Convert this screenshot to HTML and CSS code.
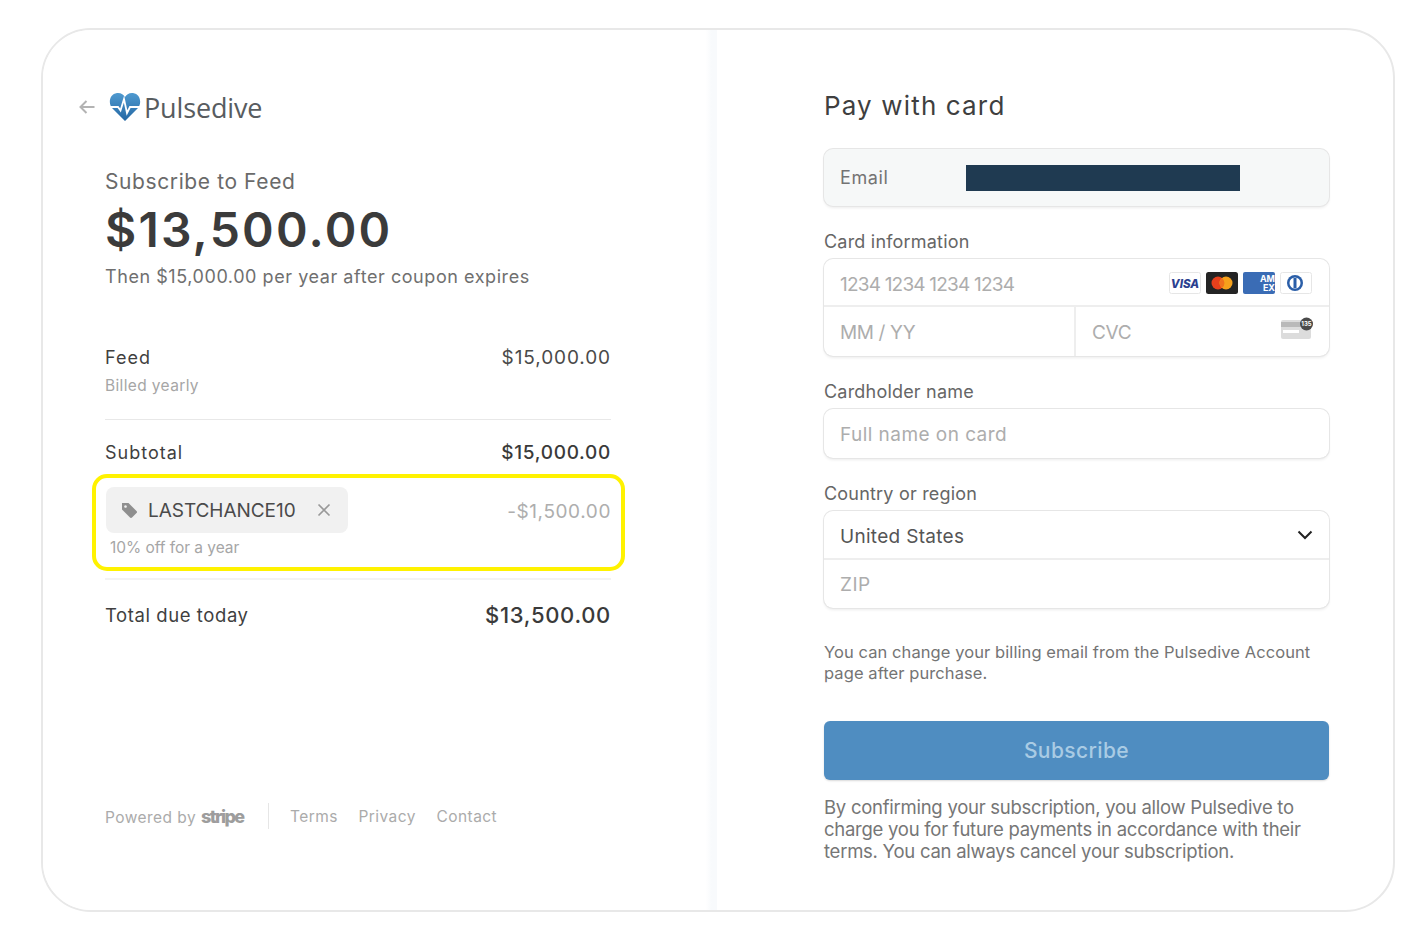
FILE: index.html
```html
<!DOCTYPE html>
<html lang="en">
<head>
<meta charset="utf-8">
<title>Subscribe to Feed</title>
<link rel="stylesheet" href="styles.css">
</head>
<body>
<main class="frame">
  <section class="summary">
    <header class="brand">
      <svg class="back" width="18" height="16" viewBox="0 0 18 16"><path d="M16.5 8H2.5M8.5 2L2.5 8l6 6" fill="none" stroke="#b3b3b3" stroke-width="2"/></svg>
      <svg class="heart" width="32" height="30" viewBox="0 0 32 30">
        <defs><linearGradient id="hg" x1="0" y1="0" x2="0" y2="1"><stop offset="0" stop-color="#4f9ad0"/><stop offset="1" stop-color="#2467a3"/></linearGradient></defs>
        <path d="M16 29L3 16C-1 11 .5 2 8 1c4-.4 6.500 1.500 8 4 1.500-2.500 4-4.400 8-4 7.500 1 9 10 5 15z" fill="url(#hg)"/>
        <path d="M1 15h8l2.500 3.500L15 7l3 14 3-6h10" fill="none" stroke="#fff" stroke-width="1.800"/>
      </svg>
      <span class="wordmark">Pulsedive</span>
    </header>

    <p class="sub-title">Subscribe to Feed</p>
    <p class="amount">$13,500.00</p>
    <p class="then">Then $15,000.00 per year after coupon expires</p>

    <div class="line-item">
      <div class="row"><span>Feed</span><span class="price">$15,000.00</span></div>
      <p class="muted billed">Billed yearly</p>
    </div>

    <div class="row subtotal"><span>Subtotal</span><span class="price strong">$15,000.00</span></div>

    <div class="coupon">
      <div class="coupon-row">
        <div class="chip">
          <svg class="tag" width="16" height="16" viewBox="0 0 16 16"><path d="M1 1h6.500L15.500 9a1.400 1.400 0 0 1 0 2L11 15.500a1.400 1.400 0 0 1-2 0L1 7.500zM4.500 3.200a1.300 1.300 0 1 0 .01 0z" fill="#8f8f8f" fill-rule="evenodd"/></svg>
          <span class="code">LASTCHANCE10</span>
          <svg class="close" width="14" height="14" viewBox="0 0 14 14"><path d="M1.500 1.500l11 11M12.500 1.500l-11 11" stroke="#999" stroke-width="1.700"/></svg>
        </div>
        <span class="discount">-$1,500.00</span>
      </div>
      <p class="muted off">10% off for a year</p>
    </div>

    <div class="row total"><span>Total due today</span><span class="price total-price">$13,500.00</span></div>

    <footer class="foot">
      <span class="powered">Powered by <b class="stripe">stripe</b></span>
      <span class="foot-sep"></span>
      <nav class="foot-links"><span>Terms</span><span>Privacy</span><span>Contact</span></nav>
    </footer>
  </section>

  <section class="pay">
    <h1 class="pay-title">Pay with card</h1>

    <div class="email-box">
      <span class="email-label">Email</span>
      <span class="redact"></span>
    </div>

    <p class="label card-label">Card information</p>
    <div class="group">
      <div class="cell cell-row">
        <span class="ph digits">1234 1234 1234 1234</span>
        <span class="brands">
          <svg class="card" width="32" height="22" viewBox="0 0 32 22"><rect x=".5" y=".5" width="31" height="21" rx="2" fill="#fff" stroke="#e6e6e6"/><text x="16" y="15.500" text-anchor="middle" class="visa">VISA</text></svg>
          <svg class="card" width="32" height="22" viewBox="0 0 32 22"><rect width="32" height="22" rx="2.500" fill="#242424"/><circle cx="12" cy="11" r="6.500" fill="#e8401c"/><circle cx="20" cy="11" r="6.500" fill="#f6a11b"/><path d="M16 5.900a6.500 6.500 0 0 1 0 10.200a6.500 6.500 0 0 1 0-10.200z" fill="#f0701c"/></svg>
          <svg class="card" width="32" height="22" viewBox="0 0 32 22"><rect width="32" height="22" rx="2" fill="#3a6cb5"/><text x="32" y="10" text-anchor="end" class="amex">AM</text><text x="32" y="18.500" text-anchor="end" class="amex">EX</text></svg>
          <svg class="card" width="32" height="22" viewBox="0 0 32 22"><rect x=".5" y=".5" width="31" height="21" rx="2" fill="#fff" stroke="#e6e6e6"/><circle cx="15" cy="11" r="8" fill="#2a5ea8"/><circle cx="15" cy="11" r="5.500" fill="#fff"/><rect x="13.500" y="6" width="3" height="10" fill="#2a5ea8"/></svg>
        </span>
      </div>
      <div class="split">
        <div class="cell half"><span class="ph mm">MM / YY</span></div>
        <div class="cell half half-r">
          <span class="ph mm">CVC</span>
          <svg class="cvc" width="34" height="24" viewBox="0 0 34 24"><rect x="1" y="3" width="30" height="19" rx="2" fill="#dcdcdc"/><rect x="1" y="5" width="30" height="5" fill="#b9b9b9"/><rect x="3" y="13" width="16" height="3" fill="#fff"/><circle cx="26.500" cy="7" r="6.500" fill="#4a4a4a"/><text x="26.500" y="9" text-anchor="middle" class="cvc-num">135</text></svg>
        </div>
      </div>
    </div>

    <p class="label name-label">Cardholder name</p>
    <div class="group"><div class="cell single"><span class="ph name-ph">Full name on card</span></div></div>

    <p class="label country-label">Country or region</p>
    <div class="group">
      <div class="cell cell-row country">
        <span class="value">United States</span>
        <svg width="16" height="10" viewBox="0 0 16 10"><path d="M1.500 1.500L8 8l6.500-6.500" fill="none" stroke="#222" stroke-width="2"/></svg>
      </div>
      <div class="cell zip"><span class="ph">ZIP</span></div>
    </div>

    <p class="note">You can change your billing email from the Pulsedive Account page after purchase.</p>

    <button class="subscribe" type="button">Subscribe</button>

    <p class="terms">By confirming your subscription, you allow Pulsedive to charge you for future payments in accordance with their terms. You can always cancel your subscription.</p>
  </section>
</main>
</body>
</html>
```
FILE: styles.css
```css
* { box-sizing: border-box; }
html, body { margin: 0; height: 100%; background: #fff; overflow: hidden; }
body {
  padding: 28px 0 0 41px;
  font-family: "Inter", "Liberation Sans", sans-serif;
  color: #3d3d3d;
}
p, h1 { margin: 0; }

.frame {
  width: 1354px;
  height: 884px;
  display: flex;
  border: 2px solid #e8e8e8;
  border-radius: 50px;
  background: #fff;
  overflow: hidden;
}

/* left */
.summary {
  width: 674px;
  padding: 0 106px 0 62px;
  background: linear-gradient(to right, #fff 98.3%, #f8fafc 99.2%);
  display: flex;
  flex-direction: column;
}
.brand { display: flex; align-items: center; height: 32px; margin: 61px 0 0 -27px; }
.back { margin-right: 13px; }
.heart { margin-right: 3px; }
.wordmark { font-family: "Open Sans", sans-serif; font-size: 27px; color: #585c60; letter-spacing: -.15px; line-height: 32px; position: relative; top: 1px; }

.sub-title { margin-top: 45px; font-size: 21px; line-height: 28px; color: #6a6a6a; font-weight: 400; letter-spacing: .6px; }
.amount { margin-top: 6px; font-size: 48px; line-height: 56px; font-weight: 600; color: #3b3b3b; letter-spacing: 2.2px; }
.then { margin-top: 7px; font-size: 18px; line-height: 24px; color: #6f6f6f; letter-spacing: .56px; }

.row { display: flex; justify-content: space-between; align-items: center; font-size: 18px; line-height: 24px; color: #3f3f3f; letter-spacing: 1px; }
.price { color: #4a4a4a; letter-spacing: .9px; font-size: 19px; }
.strong { font-weight: 500; color: #3a3a3a; letter-spacing: .7px; }
.muted { color: #a6a6a6; }

.line-item { margin-top: 57px; padding-bottom: 22px; border-bottom: 1px solid #e8e8e8; }
.billed { margin-top: 5px; font-size: 15.500px; line-height: 22px; letter-spacing: .36px; }

.subtotal { margin-top: 21px; }

.coupon {
  margin: 9px -14px 0 -13px;
  height: 97px;
  padding: 9px 10px 0;
  border: 4px solid #fff200;
  border-radius: 15px;
}
.coupon-row { display: flex; justify-content: space-between; align-items: center; }
.chip {
  width: 242px;
  height: 46px;
  display: flex;
  align-items: center;
  padding-left: 15px;
  border-radius: 8px;
  background: #f1f1f1;
}
.tag { margin-right: 11px; }
.code { font-size: 19px; color: #4a4a4a; width: 161px; letter-spacing: -.05px; }
.close { margin-left: 8px; }
.discount { font-size: 19px; color: #aeaeae; letter-spacing: .6px; margin-top: 2px; }
.off { margin: 4px 0 0 4px; font-size: 15.500px; line-height: 22px; letter-spacing: -.05px; }

.total { padding-top: 23px; border-top: 2px solid #f3f3f3; margin-top: 7px; height: 50px; align-items: flex-start; font-size: 18.500px; letter-spacing: .58px; }
.total-price { font-size: 22px; font-weight: 500; color: #3a3a3a; letter-spacing: .7px; }

.foot { display: flex; align-items: center; height: 28px; margin-top: 174px; color: #ababab; font-size: 15.500px; }
.powered { width: 163px; white-space: nowrap; letter-spacing: .45px; }
.stripe { font-size: 18px; font-weight: 800; color: #9d9d9d; letter-spacing: -1.600px; }
.foot-sep { width: 1px; height: 26px; background: #e6e6e6; }
.foot-links { display: flex; gap: 20.5px; margin-left: 21px; letter-spacing: .45px; }

/* right */
.pay { width: 505px; margin-left: 107px; display: flex; flex-direction: column; }
.pay-title { margin-top: 60px; font-size: 26px; line-height: 32px; font-weight: 400; color: #3f3f3f; letter-spacing: 1.15px; }

.email-box {
  margin-top: 27px;
  height: 57px;
  display: flex;
  align-items: center;
  padding-left: 16px;
  background: #f6f8f8;
  border-radius: 9px;
  box-shadow: 0 0 0 1px #e6e6e6, 0 2px 3px rgba(0,0,0,.08);
}
.email-label { width: 126px; font-size: 18px; color: #737373; letter-spacing: .6px; }
.redact { width: 274px; height: 26px; background: #1f3a51; }

.label { font-size: 18px; line-height: 24px; color: #666; letter-spacing: .2px; }
.card-label { margin-top: 24px; }
.name-label { margin-top: 24px; }
.country-label { margin-top: 24px; }

.group {
  margin-top: 5px;
  border-radius: 9px;
  box-shadow: 0 0 0 1px #e6e6e6, 0 2px 3px rgba(0,0,0,.08);
  overflow: hidden;
}
.cell { display: flex; align-items: center; padding: 0 16px; height: 48px; font-size: 19px; }
.cell-row { justify-content: space-between; border-bottom: 2px solid #eee; }
.ph { color: #adadad; letter-spacing: .45px; }
.digits { letter-spacing: -.8px; position: relative; top: 2px; }
.mm { letter-spacing: -.35px; position: relative; top: 1px; }
.name-ph { position: relative; top: 1px; }
.value { color: #555; letter-spacing: .3px; position: relative; top: 2px; }
.brands { display: flex; gap: 5px; margin-top: 1px; margin-right: 1px; }
.card { display: block; }
.visa { font: italic 800 11.500px "Inter", sans-serif; fill: #2b3f8f; }
.amex { font: 700 9px "Inter", sans-serif; fill: #fff; }
.cvc-num { font: 700 6px "Inter", sans-serif; fill: #fff; }

.split { display: flex; }
.half { width: 250px; height: 49px; }
.half-r { flex: 1; justify-content: space-between; padding-right: 15px; border-left: 2px solid #eee; }
.cvc { margin-top: -6px; }

.single { height: 49px; }
.country { height: 49px; }
.zip { height: 48px; }

.note { margin-top: 34px; font-size: 16.500px; line-height: 21px; color: #747474; letter-spacing: .08px; }

.subscribe {
  margin-top: 37px;
  height: 59px;
  border: 0;
  border-radius: 6px;
  background: #4f8dc1;
  color: #a9cbe4;
  font-family: inherit;
  font-size: 21px;
  font-weight: 500;
  letter-spacing: .4px;
  box-shadow: 0 1px 2px rgba(0,0,0,.15);
}
.terms { margin-top: 16px; font-size: 18.500px; line-height: 22px; color: #767676; letter-spacing: -.26px; }
```
